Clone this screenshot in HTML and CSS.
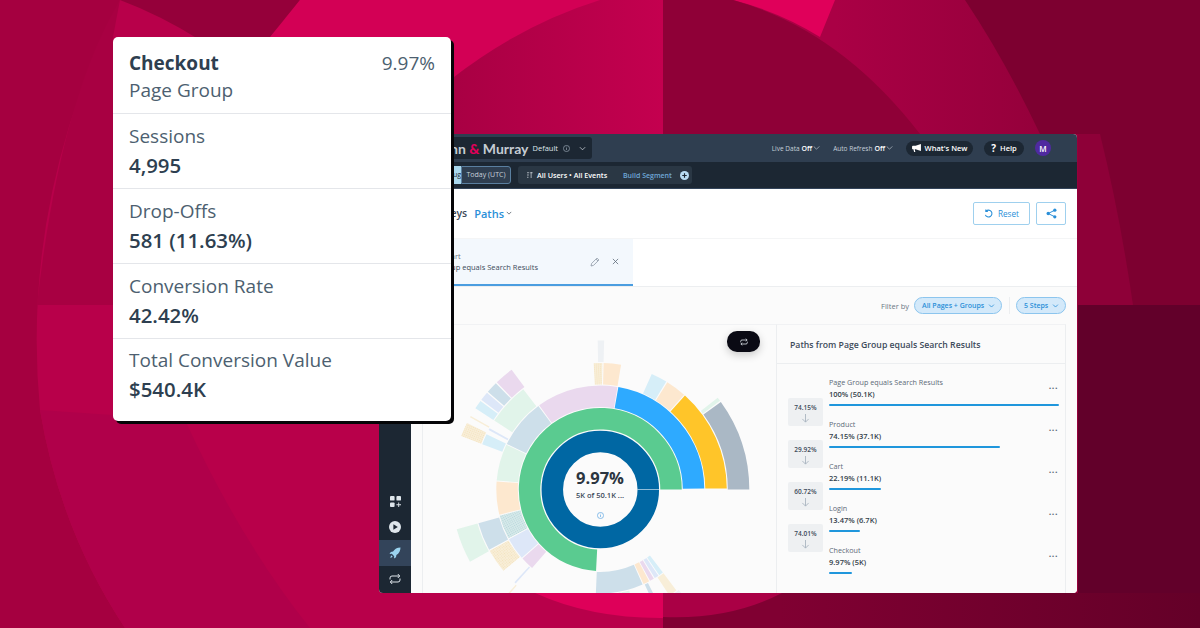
FILE: index.html
```html
<!DOCTYPE html>
<html lang="en">

<head>
    <meta charset="UTF-8">
    <meta name="viewport" content="width=device-width, initial-scale=1.0">
    <title>Paths - Checkout</title>
    <link rel="stylesheet" href="styles.css">
</head>

<body>

<!-- Background shapes -->
<svg class="backdrop" viewBox="0 0 1200 628" width="1200" height="628">
    <defs>
        <linearGradient id="innerPink" x1="450" y1="0" x2="663" y2="0" gradientUnits="userSpaceOnUse">
            <stop offset="0" stop-color="#a80043"/>
            <stop offset="1" stop-color="#c4004f"/>
        </linearGradient>
        <linearGradient id="wedge" x1="835" y1="0" x2="1040" y2="0" gradientUnits="userSpaceOnUse">
            <stop offset="0" stop-color="#aa0045"/>
            <stop offset="1" stop-color="#95003b"/>
        </linearGradient>
        <linearGradient id="bottomDark" x1="780" y1="0" x2="1200" y2="0" gradientUnits="userSpaceOnUse">
            <stop offset="0" stop-color="#800032"/>
            <stop offset="1" stop-color="#640028"/>
        </linearGradient>
    </defs>
    <rect width="1200" height="628" fill="#b8004a"/>
    <path d="M0 0H120Q20 200 40 410Q60 530 125 628H0Z" fill="#a50040"/>
    <path d="M185 420Q240 540 310 628H125Q60 530 40 410Z" fill="#b0004a"/>
    <path d="M120 0Q60 100 37 305H113V37Z" fill="#a80042"/>
    <path d="M120 0H300L270 40H200Q160 15 120 0Z" fill="#95003a"/>
    <path d="M300 0H663V300H270V37Z" fill="#d30055"/>
    <path d="M600 0Q520 25 450 80V300H663V0Z" fill="url(#innerPink)"/>
    <path d="M535 593H780Q720 620 660 618Q590 618 535 593Z" fill="#de0059"/>
    <rect x="663" width="537" height="628" fill="url(#wedge)"/>
    <path d="M733 0H835L820 37Q780 12 733 0Z" fill="#e0005a"/>
    <path d="M663 0H733Q840 30 920 134V200H663Z" fill="#8f0037"/>
    <path d="M965 0H1200V305H1078V134H1040Q1005 60 965 0Z" fill="#7d0030"/>
    <path d="M1078 134H1100Q1120 215 1133 305H1078Z" fill="#8e0038"/>
    <rect x="1078" y="305" width="122" height="323" fill="#62002a"/>
    <path d="M663 628V617Q730 620 782 593H1200V628Z" fill="url(#bottomDark)"/>
</svg>

<!-- App window -->
<div class="app">
    <aside class="sidebar">
        <div class="side-icon">
            <svg viewBox="0 0 12 12" width="11" height="11" fill="#dfe6ec"><rect width="5" height="5" rx="1"/><rect x="7" width="5" height="5" rx="1"/><rect y="7" width="5" height="5" rx="1"/><path d="M9 7h1v2h2v1h-2v2H9v-2H7V9h2z"/></svg>
        </div>
        <div class="side-icon">
            <svg viewBox="0 0 12 12" width="12" height="12"><circle cx="6" cy="6" r="6" fill="#dfe6ec"/><path d="M4.4 3.2l4.4 2.8-4.4 2.8z" fill="#1c2733"/></svg>
        </div>
        <div class="side-icon active">
            <svg viewBox="0 0 12 12" width="12" height="12" fill="#9bd4f0"><path d="M11.5.5C8 .6 5.600 2 4 4.600L1.800 5 .5 7l2.300-.2 2.400 2.400L5 11.500l2-1.300.400-2.200C10 6.400 11.400 4 11.500.5z"/><path d="M2.300 8.300l1.400 1.400-2.600 1.200z"/></svg>
        </div>
        <div class="side-icon">
            <svg viewBox="0 0 12 12" width="12" height="12" fill="none" stroke="#dfe6ec" stroke-width="1"><path d="M1 6.500V5a2 2 0 0 1 2-2h7.500M8.800 1l1.900 2-1.900 2M11 5.500V7a2 2 0 0 1-2 2H1.500M3.200 7L1.300 9l1.900 2"/></svg>
        </div>
    </aside>

    <div class="main">
        <header class="topbar">
            <div class="brand">
                <span class="brand-name">Munn <b>&amp;</b> Murray</span>
                <span class="brand-view">Default</span>
                <svg class="info" viewBox="0 0 8 8" width="7" height="7" fill="none" stroke="#aab8c5" stroke-width=".7"><circle cx="4" cy="4" r="3.500"/><path d="M4 3.400v2.400M4 2v.8"/></svg>
                <svg viewBox="0 0 8 5" width="7" height="5" fill="none" stroke="#dfe6ec" stroke-width=".8"><path d="M1 1l3 3 3-3"/></svg>
            </div>
            <div class="top-actions">
                <span class="toggle">Live Data <b>Off</b><svg viewBox="0 0 8 5" width="7" height="4" fill="none" stroke="#dfe6ec" stroke-width=".7"><path d="M.5.500L4 4 7.500.5"/></svg></span>
                <span class="toggle">Auto Refresh <b>Off</b><svg viewBox="0 0 8 5" width="7" height="4" fill="none" stroke="#dfe6ec" stroke-width=".7"><path d="M.5.500L4 4 7.500.5"/></svg></span>
                <span class="pill-dark news">
                    <svg viewBox="0 0 10 9" width="9" height="8" fill="#fff"><path d="M10 0L4 2H1a1 1 0 0 0-1 1v2a1 1 0 0 0 1 1h.5l.8 3h1.400l-.7-3H4l6 2z"/></svg>
                    What's New
                </span>
                <span class="pill-dark help"><b>?</b> Help</span>
                <span class="avatar">M</span>
            </div>
        </header>

        <div class="subbar">
            <div class="dates">
                <span class="date-range">Aug</span>
                <span class="date-zone">Today (UTC)</span>
            </div>
            <div class="segment">
                <svg viewBox="0 0 8 8" width="6" height="6" fill="none" stroke="#dfe6ec" stroke-width=".9"><path d="M0 1h3M0 4h2.500M0 7h2M5.500 0v8M7.500 1h-3"/></svg>
                <span class="segment-name">All Users • All Events</span>
                <span class="segment-build">Build Segment</span>
                <svg viewBox="0 0 10 10" width="9" height="9"><circle cx="5" cy="5" r="5" fill="#b9dcf3"/><path d="M5 2.500v5M2.500 5h5" stroke="#1c2733" stroke-width="1.300"/></svg>
            </div>
        </div>

        <div class="page-head">
            <div class="crumbs">
                <span class="crumb">Journeys</span>
                <span class="crumb-active">Paths</span>
                <svg viewBox="0 0 8 5" width="6" height="4" fill="none" stroke="#4a5560" stroke-width="1"><path d="M1 1l3 3 3-3"/></svg>
            </div>
            <div class="head-btns">
                <button class="btn">
                    <svg viewBox="0 0 10 10" width="9" height="9" fill="none" stroke="#2a8fd8" stroke-width="1.200"><path d="M2.200 2.500A3.800 3.800 0 1 1 1.500 6.500M2 .5v2.300h2.300"/></svg>
                    Reset
                </button>
                <button class="btn btn-icon">
                    <svg viewBox="0 0 10 10" width="11" height="11" fill="#2a8fd8" stroke="#2a8fd8"><circle cx="8" cy="2" r="1.500" stroke="none"/><circle cx="2" cy="5" r="1.500" stroke="none"/><circle cx="8" cy="8" r="1.500" stroke="none"/><path d="M8 2L2 5l6 3" fill="none" stroke-width=".9"/></svg>
                </button>
            </div>
        </div>

        <div class="tabs">
            <div class="tab">
                <div class="tab-text">
                    <div class="tab-label">Start</div>
                    <div class="tab-value">Group equals Search Results</div>
                </div>
                <svg viewBox="0 0 10 10" width="10" height="10" fill="none" stroke="#8a96a3" stroke-width=".8"><path d="M1 9l.6-2.500L7 1.100l1.900 1.900L3.500 8.400zM6 2.100L8 4"/></svg>
                <svg class="tab-close" viewBox="0 0 8 8" width="7" height="7" fill="none" stroke="#5c6a78" stroke-width=".9"><path d="M1 1l6 6M7 1L1 7"/></svg>
            </div>
        </div>

        <div class="filters">
            <span class="filter-label">Filter by</span>
            <span class="filter-pill wide">All Pages + Groups<svg viewBox="0 0 8 5" width="7" height="4" fill="none" stroke="#2a8fd8" stroke-width="1"><path d="M1 .8l3 3 3-3"/></svg></span>
            <span class="filter-sep"></span>
            <span class="filter-pill">5 Steps<svg viewBox="0 0 8 5" width="7" height="4" fill="none" stroke="#2a8fd8" stroke-width="1"><path d="M1 .8l3 3 3-3"/></svg></span>
        </div>

        <div class="content">
            <section class="chart-panel">
                <svg class="sunburst" viewBox="-177.300 -164.500 354 269" width="354" height="269">
                    <defs>
                        <pattern id="dotTeal" width="2" height="2" patternUnits="userSpaceOnUse"><rect width="2" height="2" fill="#d6e9ea"/><rect width="1" height="1" fill="#b5d6d9"/></pattern>
                        <pattern id="dotCream" width="2" height="2" patternUnits="userSpaceOnUse"><rect width="2" height="2" fill="#f8eed8"/><rect width="1" height="1" fill="#f3e2bd"/></pattern>
                    </defs>
                    <circle class="seg ring1" r="48" stroke="#0067a3"/>
                    <line x1="37" y1="0" x2="59" y2="0" stroke="#cfe3f0" stroke-width=".7"/>
                    <circle class="seg" r="70.750" stroke="#5acb90" pathLength="360" stroke-dasharray="267 360" transform="rotate(-267)"/>

                    <!-- third ring -->
                    <circle class="seg" r="93.250" stroke="#2eaaff" pathLength="360" stroke-dasharray="79.500 360" transform="rotate(-80)"/>
                    <circle class="seg" r="93.250" stroke="#ead9ee" pathLength="360" stroke-dasharray="45.500 360" transform="rotate(-126)"/>
                    <circle class="seg" r="93.250" stroke="#cddfea" pathLength="360" stroke-dasharray="27.500 360" transform="rotate(-154)"/>
                    <circle class="seg" r="93.250" stroke="#e1f4ea" pathLength="360" stroke-dasharray="20.500 360" transform="rotate(-175)"/>
                    <circle class="seg" r="93.250" stroke="#fde8cf" pathLength="360" stroke-dasharray="18.500 360" transform="rotate(-194)"/>
                    <circle class="seg" r="93.250" stroke="url(#dotTeal)" pathLength="360" stroke-dasharray="13.500 360" transform="rotate(-208)"/>
                    <circle class="seg" r="93.250" stroke="#dde7f8" pathLength="360" stroke-dasharray="12.500 360" transform="rotate(-221)"/>
                    <circle class="seg" r="93.250" stroke="#ead9ee" pathLength="360" stroke-dasharray="7.500 360" transform="rotate(-229)"/>
                    <circle class="seg" r="93.250" stroke="#cddfea" pathLength="360" stroke-dasharray="26.500 360" transform="rotate(-294)"/>
                    <circle class="seg" r="93.250" stroke="#fde8cf" pathLength="360" stroke-dasharray="3.500 360" transform="rotate(-298)"/>
                    <circle class="seg" r="93.250" stroke="#ead9ee" pathLength="360" stroke-dasharray="2.500 360" transform="rotate(-301)"/>
                    <circle class="seg" r="93.250" stroke="#dde7f8" pathLength="360" stroke-dasharray="2.500 360" transform="rotate(-304)"/>
                    <circle class="seg" r="93.250" stroke="#d6eef8" pathLength="360" stroke-dasharray="2.500 360" transform="rotate(-307)"/>

                    <!-- fourth ring -->
                    <circle class="seg" r="115.750" stroke="#ffc529" pathLength="360" stroke-dasharray="47.500 360" transform="rotate(-48)"/>
                    <circle class="seg" r="115.750" stroke="#fde8cf" pathLength="360" stroke-dasharray="9.500 360" transform="rotate(-58)"/>
                    <circle class="seg" r="115.750" stroke="#d6eef8" pathLength="360" stroke-dasharray="7.500 360" transform="rotate(-66)"/>
                    <circle class="seg" r="115.750" stroke="#fde8cf" pathLength="360" stroke-dasharray="8 360" transform="rotate(-88.500)"/>
                    <circle class="seg" r="115.750" stroke="url(#dotCream)" pathLength="360" stroke-dasharray="4 360" transform="rotate(-93)"/>
                    <circle class="seg" r="115.750" stroke="#e1f4ea" pathLength="360" stroke-dasharray="19.500 360" transform="rotate(-147)"/>
                    <circle class="seg" r="115.750" stroke="#dde7f8" pathLength="360" stroke-dasharray="1 360" transform="rotate(-152)"/>
                    <circle class="seg" r="115.750" stroke="#d6eef8" pathLength="360" stroke-dasharray="5 360" transform="rotate(-159)"/>
                    <circle class="seg" r="115.750" stroke="#cddfea" pathLength="360" stroke-dasharray="13 360" transform="rotate(-208.500)"/>
                    <circle class="seg" r="115.750" stroke="url(#dotCream)" pathLength="360" stroke-dasharray="11 360" transform="rotate(-220)"/>
                    <circle class="seg" r="115.750" stroke="#dde7f8" pathLength="360" stroke-dasharray=".8 360" transform="rotate(-228)"/>
                    <circle class="seg" r="115.750" stroke="#cddfea" pathLength="360" stroke-dasharray="13 360" transform="rotate(-281)"/>
                    <circle class="seg" r="115.750" stroke="#e1f4ea" pathLength="360" stroke-dasharray="4.500 360" transform="rotate(-286)"/>
                    <circle class="seg" r="115.750" stroke="#cddfea" pathLength="360" stroke-dasharray="2 360" transform="rotate(-297)"/>
                    <circle class="seg" r="115.750" stroke="#f8eed8" pathLength="360" stroke-dasharray="4 360" transform="rotate(-307)"/>

                    <!-- outer ring -->
                    <circle class="seg" r="138.250" stroke="#aab8c5" pathLength="360" stroke-dasharray="36 360" transform="rotate(-36)"/>
                    <circle class="seg" r="138.250" stroke="#e1f4ea" pathLength="360" stroke-dasharray="1.500 360" transform="rotate(-38)"/>
                    <circle class="seg" r="138.250" stroke="#eef1f4" pathLength="360" stroke-dasharray="2.500 360" transform="rotate(-91)"/>
                    <circle class="seg" r="138.250" stroke="#ead9ee" pathLength="360" stroke-dasharray="7.500 360" transform="rotate(-134)"/>
                    <circle class="seg" r="138.250" stroke="#cddfea" pathLength="360" stroke-dasharray="4.500 360" transform="rotate(-139)"/>
                    <circle class="seg" r="138.250" stroke="#dde7f8" pathLength="360" stroke-dasharray="3.500 360" transform="rotate(-143)"/>
                    <circle class="seg" r="138.250" stroke="#d6eef8" pathLength="360" stroke-dasharray="3.500 360" transform="rotate(-147)"/>
                    <circle class="seg" r="138.250" stroke="#f8eed8" pathLength="360" stroke-dasharray=".6 360" transform="rotate(-151)"/>
                    <circle class="seg" r="138.250" stroke="url(#dotCream)" pathLength="360" stroke-dasharray="5.500 360" transform="rotate(-159)"/>
                    <circle class="seg" r="138.250" stroke="#e1f4ea" pathLength="360" stroke-dasharray="13.500 360" transform="rotate(-209)"/>
                    <circle class="seg" r="138.250" stroke="#f8eed8" pathLength="360" stroke-dasharray=".6 360" transform="rotate(-229)"/>
                    <circle class="seg" r="138.250" stroke="#eef1f4" pathLength="360" stroke-dasharray="2.500 360" transform="rotate(-308)"/>
                </svg>
                <div class="chart-center">
                    <div class="center-pct">9.97%</div>
                    <div class="center-sub">5K of 50.1K ...</div>
                    <svg viewBox="0 0 8 8" width="7" height="7" fill="none" stroke="#4a9de0" stroke-width=".7"><circle cx="4" cy="4" r="3.500"/><path d="M4 3.400v2.400M4 2v.8"/></svg>
                </div>
                <button class="swap-btn">
                    <svg viewBox="0 0 12 12" width="8" height="8" fill="none" stroke="#dfe6ec" stroke-width="1.200"><path d="M1 6.500V5a2 2 0 0 1 2-2h7.500M8.800 1l1.900 2-1.900 2M11 5.500V7a2 2 0 0 1-2 2H1.500M3.200 7L1.300 9l1.900 2"/></svg>
                </button>
            </section>

            <section class="paths-panel">
                <h3 class="paths-title">Paths from Page Group equals Search Results</h3>
                <div class="paths-body">
                    <div class="steps">
                        <div class="step">74.15%<svg viewBox="0 0 10 10" width="9" height="9" fill="none" stroke="#a9b4bf" stroke-width="1"><path d="M5 0v9M1.500 5.500L5 9l3.500-3.500"/></svg></div>
                        <div class="step">29.92%<svg viewBox="0 0 10 10" width="9" height="9" fill="none" stroke="#a9b4bf" stroke-width="1"><path d="M5 0v9M1.500 5.500L5 9l3.500-3.500"/></svg></div>
                        <div class="step">60.72%<svg viewBox="0 0 10 10" width="9" height="9" fill="none" stroke="#a9b4bf" stroke-width="1"><path d="M5 0v9M1.500 5.500L5 9l3.500-3.500"/></svg></div>
                        <div class="step">74.01%<svg viewBox="0 0 10 10" width="9" height="9" fill="none" stroke="#a9b4bf" stroke-width="1"><path d="M5 0v9M1.500 5.500L5 9l3.500-3.500"/></svg></div>
                    </div>
                    <div class="path-rows">
                        <div class="path-row">
                            <div class="path-name">Page Group equals Search Results</div>
                            <div class="path-value">100% (50.1K)</div>
                            <div class="path-bar" style="width: 230px"></div>
                            <span class="path-more">...</span>
                        </div>
                        <div class="path-row">
                            <div class="path-name">Product</div>
                            <div class="path-value">74.15% (37.1K)</div>
                            <div class="path-bar" style="width: 171px"></div>
                            <span class="path-more">...</span>
                        </div>
                        <div class="path-row">
                            <div class="path-name">Cart</div>
                            <div class="path-value">22.19% (11.1K)</div>
                            <div class="path-bar" style="width: 52px"></div>
                            <span class="path-more">...</span>
                        </div>
                        <div class="path-row">
                            <div class="path-name">Login</div>
                            <div class="path-value">13.47% (6.7K)</div>
                            <div class="path-bar" style="width: 31px"></div>
                            <span class="path-more">...</span>
                        </div>
                        <div class="path-row">
                            <div class="path-name">Checkout</div>
                            <div class="path-value">9.97% (5K)</div>
                            <div class="path-bar" style="width: 23px"></div>
                            <span class="path-more">...</span>
                        </div>
                    </div>
                </div>
            </section>
        </div>
    </div>
</div>

<!-- Tooltip card -->
<div class="card">
    <div class="card-head">
        <div class="card-top">
            <strong>Checkout</strong>
            <span>9.97%</span>
        </div>
        <div class="card-sub">Page Group</div>
    </div>
    <div class="card-row">
        <div class="card-label">Sessions</div>
        <div class="card-value">4,995</div>
    </div>
    <div class="card-row">
        <div class="card-label">Drop-Offs</div>
        <div class="card-value">581 (11.63%)</div>
    </div>
    <div class="card-row">
        <div class="card-label">Conversion Rate</div>
        <div class="card-value">42.42%</div>
    </div>
    <div class="card-row">
        <div class="card-label">Total Conversion Value</div>
        <div class="card-value">$540.4K</div>
    </div>
</div>

</body>

</html>
```

FILE: styles.css
```css
* {
    margin: 0;
    padding: 0;
    box-sizing: border-box;
}

body {
    position: relative;
    width: 1200px;
    height: 628px;
    overflow: hidden;
    font-family: 'Open Sans', sans-serif;
    color: #2e3f50;
}

.backdrop {
    position: absolute;
    left: 0;
    top: 0;
}

/* App window */
.app {
    position: absolute;
    left: 379px;
    top: 134px;
    width: 698px;
    height: 459px;
    display: flex;
    border-radius: 4px;
    overflow: hidden;
    background-color: white;
}

.sidebar {
    width: 32px;
    background-color: #1c2733;
    display: flex;
    flex-direction: column;
    justify-content: flex-end;
    padding-bottom: 1px;
}

.side-icon {
    height: 26px;
    display: flex;
    justify-content: center;
    align-items: center;
}

.side-icon.active {
    background-color: #33445a;
}

.main {
    width: 666px;
    display: flex;
    flex-direction: column;
}

.topbar {
    height: 28px;
    background-color: #2f3e50;
    display: flex;
    justify-content: space-between;
    align-items: center;
    padding-right: 26px;
    flex-shrink: 0;
}

.brand {
    width: 181px;
    height: 22px;
    background-color: #1c2733;
    border-radius: 0 3px 3px 0;
    display: flex;
    justify-content: flex-end;
    align-items: center;
    gap: 5px;
    padding-right: 6px;
    color: #dfe6ec;
}

.brand-name {
    font-family: 'Lato', sans-serif;
    font-size: 14px;
    font-weight: 700;
    color: #c5ccd3;
    white-space: nowrap;
}

.brand-name b {
    color: #e0005a;
}

.brand-view {
    font-size: 7.5px;
    margin-left: -1px;
}

.brand .info {
    margin-right: 4px;
}

.top-actions {
    display: flex;
    align-items: center;
    font-size: 7.5px;
    color: #c6d0da;
}

.toggle {
    display: flex;
    align-items: center;
    gap: 1px;
    margin-right: 13px;
    font-size: 6.5px;
    white-space: nowrap;
}

.toggle b {
    color: #fff;
    font-size: 7px;
    font-weight: 600;
    margin-left: 1px;
}

.pill-dark {
    height: 15px;
    background-color: #1c2733;
    border-radius: 8px;
    color: #fff;
    display: flex;
    align-items: center;
    justify-content: center;
    gap: 4px;
    font-weight: 600;
}

.news {
    width: 67px;
    margin-right: 11px;
}

.help {
    width: 40px;
    margin-right: 11px;
}

.help b {
    font-size: 10px;
    font-weight: 700;
}

.avatar {
    width: 16px;
    height: 16px;
    border-radius: 50%;
    background-color: #4f2aa0;
    color: #fff;
    font-size: 8px;
    font-weight: 600;
    display: flex;
    justify-content: center;
    align-items: center;
}

.subbar {
    height: 27px;
    background-color: #1c2733;
    border-bottom: 1px solid #33445a;
    display: flex;
    align-items: center;
    flex-shrink: 0;
}

.dates {
    width: 100px;
    height: 18px;
    display: flex;
    font-size: 7px;
}

.date-range {
    width: 50px;
    background-color: #a9d8ee;
    color: #1c2733;
    text-align: right;
    line-height: 18px;
}

.date-zone {
    width: 50px;
    background-color: #2f3e50;
    border: 1px solid #5a7fa0;
    border-radius: 0 3px 3px 0;
    color: #c6d0da;
    text-align: center;
    line-height: 16px;
    white-space: nowrap;
}

.segment {
    width: 174px;
    height: 18px;
    margin-left: 7px;
    background-color: #2a3744;
    border-radius: 3px;
    display: flex;
    align-items: center;
    padding-left: 9px;
    font-size: 7.5px;
    white-space: nowrap;
}

.segment-name {
    color: #fff;
    font-size: 7.2px;
    font-weight: 600;
    margin-left: 4px;
    width: 86px;
}

.segment-build {
    color: #6fa8d8;
    font-size: 7px;
    font-weight: 600;
    width: 57px;
}

.page-head {
    height: 49px;
    background-color: white;
    display: flex;
    justify-content: space-between;
    align-items: center;
    padding: 0 11px 1px 12px;
    flex-shrink: 0;
}

.crumbs {
    display: flex;
    align-items: center;
    font-size: 10.5px;
    font-weight: 600;
}

.crumb {
    color: #3c4a5a;
    margin-right: 7px;
}

.crumb-active {
    color: #2a8fd8;
    font-size: 11px;
    margin-right: 2px;
}

.head-btns {
    display: flex;
    gap: 6px;
}

.btn {
    width: 57px;
    height: 23px;
    background-color: white;
    border: 1px solid #9fd0ee;
    border-radius: 2px;
    color: #2a8fd8;
    font-family: 'Open Sans', sans-serif;
    font-size: 8.2px;
    display: flex;
    justify-content: center;
    align-items: center;
    gap: 5px;
}

.btn-icon {
    width: 30px;
}

.tabs {
    height: 49px;
    background-color: white;
    border-top: 1px solid #f4f5f6;
    border-bottom: 1px solid #eceef0;
    flex-shrink: 0;
}

.tab {
    width: 222px;
    height: 47px;
    background-color: #f3f8fd;
    border-bottom: 2px solid #4a9de0;
    display: flex;
    align-items: center;
    padding-left: 27px;
}

.tab-text {
    width: 152px;
}

.tab-label {
    font-size: 7.5px;
    color: #6a7784;
    line-height: 11px;
    padding-left: 6px;
}

.tab-value {
    font-size: 7.5px;
    color: #3c4a5a;
    line-height: 11px;
    white-space: nowrap;
}

.tab-close {
    margin-left: 12px;
}

.filters {
    height: 37px;
    background-color: #fbfbfb;
    display: flex;
    justify-content: flex-end;
    align-items: center;
    padding-right: 11px;
    font-size: 7px;
    flex-shrink: 0;
}

.filter-label {
    color: #6a7784;
    font-size: 7.5px;
    margin-right: 5px;
}

.filter-pill {
    width: 50px;
    height: 17px;
    background-color: #d3e9fa;
    border: 1px solid #8cc5ee;
    border-radius: 9px;
    color: #2a8fd8;
    font-weight: 600;
    display: flex;
    justify-content: space-between;
    align-items: center;
    padding: 0 6px 0 7px;
    white-space: nowrap;
}

.filter-pill.wide {
    width: 88px;
}

.filter-sep {
    width: 1px;
    height: 17px;
    background-color: #eceef0;
    margin: 0 6px 0 7px;
}

.content {
    flex: 1;
    min-height: 0;
    display: flex;
    background-color: #fbfbfb;
    padding-left: 11px;
    padding-right: 11px;
}

.chart-panel {
    position: relative;
    width: 354px;
    border-left: 1px solid #eceef0;
    border-top: 1px solid #f1f2f4;
    overflow: hidden;
    flex-shrink: 0;
}

.sunburst {
    position: absolute;
    left: 0;
    top: 0;
}

.seg {
    fill: none;
    stroke-width: 21.5;
}

.chart-center {
    position: absolute;
    left: 137px;
    top: 141px;
    width: 80px;
    text-align: center;
}

.center-pct {
    font-size: 16.5px;
    font-weight: 700;
    color: #2b3540;
    line-height: 24px;
}

.center-sub {
    font-size: 7.5px;
    font-weight: 600;
    color: #3c4a5a;
    line-height: 11px;
    margin-bottom: 1px;
}

.swap-btn {
    position: absolute;
    left: 304px;
    top: 6px;
    width: 33px;
    height: 21px;
    background-color: #0a0a14;
    border: none;
    border-radius: 10px;
    box-shadow: 0 3px 8px rgba(0, 0, 0, 0.2);
    display: flex;
    justify-content: center;
    align-items: center;
}

.paths-panel {
    width: 290px;
    border-left: 1px solid #eceef0;
    border-right: 1px solid #eceef0;
    border-top: 1px solid #f1f2f4;
    flex-shrink: 0;
}

.paths-title {
    height: 39px;
    border-bottom: 1px solid #eceef0;
    padding-left: 13px;
    font-size: 8.7px;
    font-weight: 600;
    color: #3c4a5a;
    line-height: 40px;
}

.paths-body {
    display: flex;
    padding-left: 11px;
}

.steps {
    width: 35px;
    padding-top: 34px;
    display: flex;
    flex-direction: column;
    gap: 14px;
    flex-shrink: 0;
}

.step {
    height: 28px;
    background-color: #eef0f2;
    border-radius: 2px;
    display: flex;
    flex-direction: column;
    align-items: center;
    gap: 1px;
    padding-top: 5px;
    font-size: 6.5px;
    font-weight: 600;
    color: #3c4a5a;
    line-height: 10px;
}

.path-rows {
    margin-left: 6px;
    width: 230px;
    padding-top: 12px;
}

.path-row {
    position: relative;
    height: 42px;
}

.path-name {
    font-size: 7.2px;
    color: #5c6a78;
    line-height: 12px;
}

.path-value {
    font-size: 7.5px;
    font-weight: 600;
    color: #333e4a;
    line-height: 12px;
}

.path-bar {
    height: 2px;
    margin-top: 4px;
    background-color: #1f96dc;
    border-radius: 1px;
}

.path-more {
    position: absolute;
    right: 1px;
    top: 3px;
    font-size: 9px;
    font-weight: 700;
    color: #5c6a78;
    letter-spacing: 0.5px;
}

/* Tooltip card */
.card {
    position: absolute;
    left: 113px;
    top: 37px;
    width: 338px;
    height: 384px;
    background-color: white;
    border-radius: 5px;
    box-shadow: 3px 3px 0 #050507;
    font-size: 19px;
    color: #4d5f70;
}

.card-head {
    height: 76px;
    padding: 13px 16px 0;
    line-height: 27px;
}

.card-top {
    display: flex;
    justify-content: space-between;
}

.card-top strong {
    color: #2e3f50;
    font-weight: 700;
}

.card-row {
    height: 75px;
    border-top: 1px solid #e4e6ea;
    padding: 8px 16px 0;
    line-height: 29px;
}

.card-row:last-child {
    padding-top: 7px;
}

.card-value {
    color: #2e3f50;
    font-size: 20.4px;
    font-weight: 600;
}
```
